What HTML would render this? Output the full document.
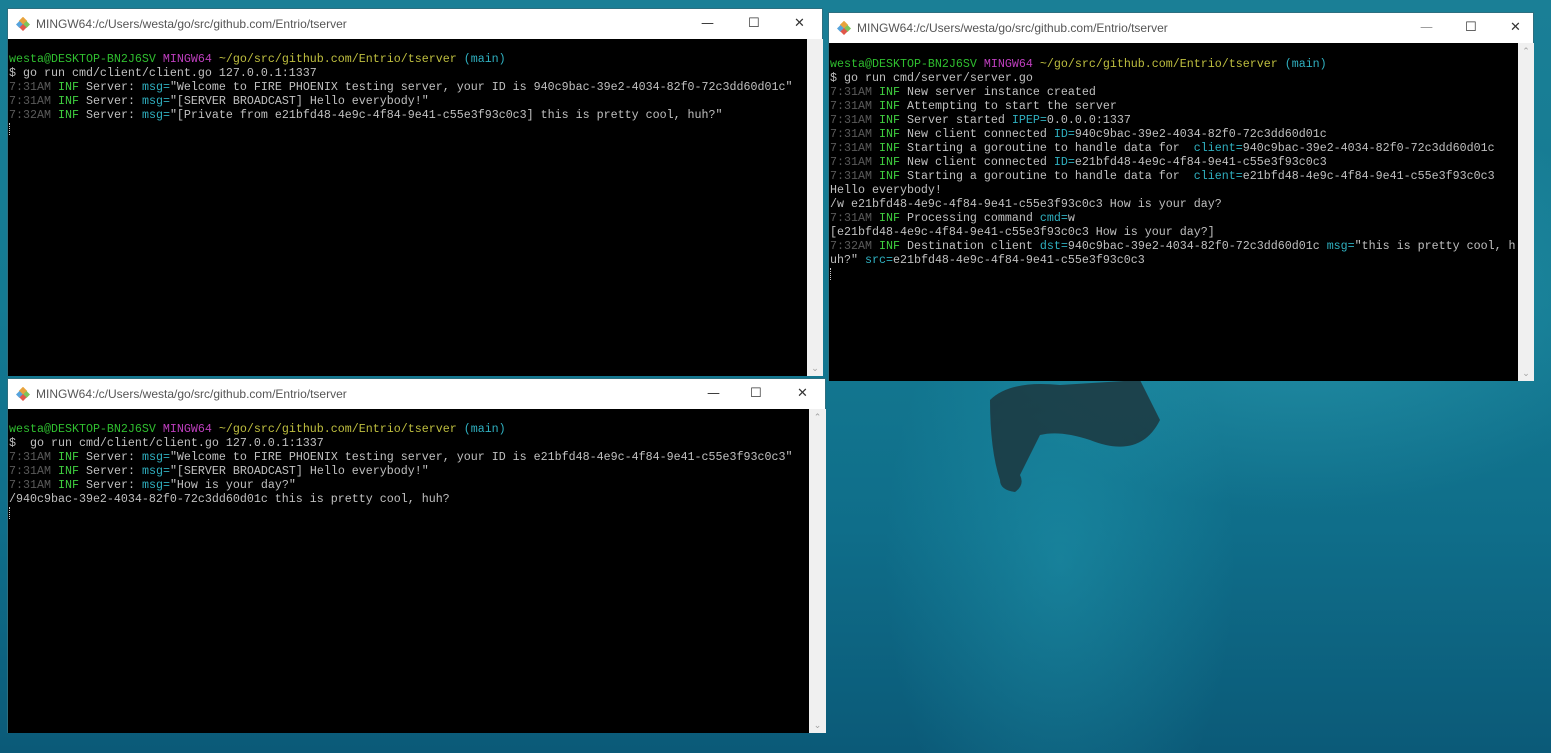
<!DOCTYPE html>
<html><head><meta charset="utf-8"><style>
*{margin:0;padding:0;box-sizing:border-box}
html,body{width:1551px;height:753px;overflow:hidden}
body{position:relative;background:
radial-gradient(ellipse 250px 450px at 1060px 560px, rgba(40,170,190,.35), rgba(0,0,0,0) 70%),
radial-gradient(ellipse 500px 300px at 1300px 300px, rgba(60,180,200,.4), rgba(0,0,0,0) 70%),
linear-gradient(180deg,#1a7f96 0%,#147a92 40%,#0f6e8a 70%,#0b5a78 100%);}
.win{position:absolute;background:#fff;border:1px solid #2c6f80}
.title{height:30px;position:relative;font:12px "Liberation Sans",sans-serif;color:#555;line-height:30px;padding-left:28px}
.icon{position:absolute;left:8px;top:8px;width:14px;height:14px}
.ctl{position:absolute;top:0;height:30px;font:13px/30px "DejaVu Sans",sans-serif;color:#333}
.term{position:absolute;background:#000;font:11.67px "Liberation Mono",monospace;color:#c0c0c0;line-height:14px;padding:12px 0 0 1px;white-space:pre;overflow:hidden}
.sb{position:absolute;background:#f0f0f0;color:#a0a0a0;font:9px sans-serif;text-align:center}
.g{color:#2fbf2f}.m{color:#bf3fbf}.y{color:#bfbf3f}.c{color:#2fb0c0}.t{color:#5a5a5a}.i{color:#3fcf3f}
.cur{display:inline-block;width:1px;height:12px;border-left:1px dotted #ccc;vertical-align:middle}
</style></head><body>
<svg style="position:absolute;left:970px;top:380px" width="200" height="130"><path d="M20 20 Q40 0 90 5 L170 0 L190 40 Q170 80 120 60 Q90 50 70 55 Q60 75 50 95 Q55 105 45 112 Q30 110 30 100 Q20 70 20 20Z" fill="#1d3238" opacity=".8"/></svg>

<!-- Window 1 -->
<div class="win" style="left:7px;top:8px;width:816px;height:368px">
<div class="title"><svg class="icon" viewBox="0 0 14 14"><rect x="4" y="1" width="6" height="6" transform="rotate(45 7 4)" fill="#e8a33d"/><rect x="1" y="5" width="5" height="5" transform="rotate(45 3.5 7.5)" fill="#56a3dc"/><rect x="8" y="5" width="5" height="5" transform="rotate(45 10.5 7.5)" fill="#7ec45a"/><rect x="4.5" y="8" width="5" height="5" transform="rotate(45 7 10.5)" fill="#e0574a"/></svg>MINGW64:/c/Users/westa/go/src/github.com/Entrio/tserver
<span class="ctl" style="left:693px">—</span><span class="ctl" style="left:740px">☐</span><span class="ctl" style="left:786px">✕</span></div>
<div class="term" style="left:0;top:30px;width:799px;height:337px;padding-top:13px"><span class="g">westa@DESKTOP-BN2J6SV</span> <span class="m">MINGW64</span> <span class="y">~/go/src/github.com/Entrio/tserver</span> <span class="c">(main)</span>
$ go run cmd/client/client.go 127.0.0.1:1337
<span class="t">7:31AM</span> <span class="i">INF</span> Server: <span class="c">msg=</span>"Welcome to FIRE PHOENIX testing server, your ID is 940c9bac-39e2-4034-82f0-72c3dd60d01c"
<span class="t">7:31AM</span> <span class="i">INF</span> Server: <span class="c">msg=</span>"[SERVER BROADCAST] Hello everybody!"
<span class="t">7:32AM</span> <span class="i">INF</span> Server: <span class="c">msg=</span>"[Private from e21bfd48-4e9c-4f84-9e41-c55e3f93c0c3] this is pretty cool, huh?"
<span class="cur"></span></div>
<div class="sb" style="left:799px;top:30px;width:16px;height:337px"><div style="position:absolute;bottom:2px;width:16px">⌄</div></div>
</div>

<!-- Window 2 -->
<div class="win" style="left:828px;top:12px;width:706px;height:369px">
<div class="title"><svg class="icon" viewBox="0 0 14 14"><rect x="4" y="1" width="6" height="6" transform="rotate(45 7 4)" fill="#e8a33d"/><rect x="1" y="5" width="5" height="5" transform="rotate(45 3.5 7.5)" fill="#56a3dc"/><rect x="8" y="5" width="5" height="5" transform="rotate(45 10.5 7.5)" fill="#7ec45a"/><rect x="4.5" y="8" width="5" height="5" transform="rotate(45 7 10.5)" fill="#e0574a"/></svg>MINGW64:/c/Users/westa/go/src/github.com/Entrio/tserver
<span class="ctl" style="left:591px;color:#999">—</span><span class="ctl" style="left:636px">☐</span><span class="ctl" style="left:681px">✕</span></div>
<div class="term" style="left:0;top:30px;width:689px;height:338px;padding-top:14px"><span class="g">westa@DESKTOP-BN2J6SV</span> <span class="m">MINGW64</span> <span class="y">~/go/src/github.com/Entrio/tserver</span> <span class="c">(main)</span>
$ go run cmd/server/server.go
<span class="t">7:31AM</span> <span class="i">INF</span> New server instance created
<span class="t">7:31AM</span> <span class="i">INF</span> Attempting to start the server
<span class="t">7:31AM</span> <span class="i">INF</span> Server started <span class="c">IPEP=</span>0.0.0.0:1337
<span class="t">7:31AM</span> <span class="i">INF</span> New client connected <span class="c">ID=</span>940c9bac-39e2-4034-82f0-72c3dd60d01c
<span class="t">7:31AM</span> <span class="i">INF</span> Starting a goroutine to handle data for  <span class="c">client=</span>940c9bac-39e2-4034-82f0-72c3dd60d01c
<span class="t">7:31AM</span> <span class="i">INF</span> New client connected <span class="c">ID=</span>e21bfd48-4e9c-4f84-9e41-c55e3f93c0c3
<span class="t">7:31AM</span> <span class="i">INF</span> Starting a goroutine to handle data for  <span class="c">client=</span>e21bfd48-4e9c-4f84-9e41-c55e3f93c0c3
Hello everybody!
/w e21bfd48-4e9c-4f84-9e41-c55e3f93c0c3 How is your day?
<span class="t">7:31AM</span> <span class="i">INF</span> Processing command <span class="c">cmd=</span>w
[e21bfd48-4e9c-4f84-9e41-c55e3f93c0c3 How is your day?]
<span class="t">7:32AM</span> <span class="i">INF</span> Destination client <span class="c">dst=</span>940c9bac-39e2-4034-82f0-72c3dd60d01c <span class="c">msg=</span>"this is pretty cool, h
uh?" <span class="c">src=</span>e21bfd48-4e9c-4f84-9e41-c55e3f93c0c3
<span class="cur"></span></div>
<div class="sb" style="left:689px;top:30px;width:16px;height:338px"><div style="position:absolute;top:3px;width:16px">⌃</div><div style="position:absolute;bottom:2px;width:16px">⌄</div></div>
</div>

<!-- Window 3 -->
<div class="win" style="left:7px;top:378px;width:819px;height:355px">
<div class="title"><svg class="icon" viewBox="0 0 14 14"><rect x="4" y="1" width="6" height="6" transform="rotate(45 7 4)" fill="#e8a33d"/><rect x="1" y="5" width="5" height="5" transform="rotate(45 3.5 7.5)" fill="#56a3dc"/><rect x="8" y="5" width="5" height="5" transform="rotate(45 10.5 7.5)" fill="#7ec45a"/><rect x="4.5" y="8" width="5" height="5" transform="rotate(45 7 10.5)" fill="#e0574a"/></svg>MINGW64:/c/Users/westa/go/src/github.com/Entrio/tserver
<span class="ctl" style="left:699px">—</span><span class="ctl" style="left:742px">☐</span><span class="ctl" style="left:789px">✕</span></div>
<div class="term" style="left:0;top:30px;width:801px;height:324px;padding-top:13px"><span class="g">westa@DESKTOP-BN2J6SV</span> <span class="m">MINGW64</span> <span class="y">~/go/src/github.com/Entrio/tserver</span> <span class="c">(main)</span>
$  go run cmd/client/client.go 127.0.0.1:1337
<span class="t">7:31AM</span> <span class="i">INF</span> Server: <span class="c">msg=</span>"Welcome to FIRE PHOENIX testing server, your ID is e21bfd48-4e9c-4f84-9e41-c55e3f93c0c3"
<span class="t">7:31AM</span> <span class="i">INF</span> Server: <span class="c">msg=</span>"[SERVER BROADCAST] Hello everybody!"
<span class="t">7:31AM</span> <span class="i">INF</span> Server: <span class="c">msg=</span>"How is your day?"
/940c9bac-39e2-4034-82f0-72c3dd60d01c this is pretty cool, huh?
<span class="cur"></span></div>
<div class="sb" style="left:801px;top:30px;width:17px;height:324px"><div style="position:absolute;top:3px;width:17px">⌃</div><div style="position:absolute;bottom:2px;width:17px">⌄</div></div>
</div>
</body></html>
